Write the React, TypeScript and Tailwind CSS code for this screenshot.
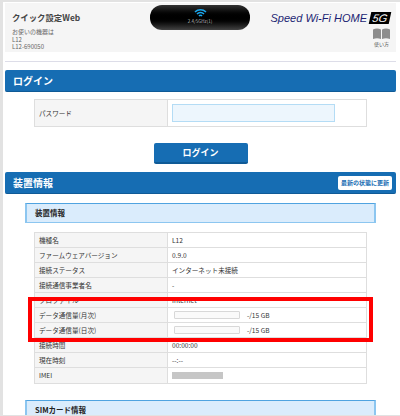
const font = { fontFamily: '"Noto Sans CJK JP", "Liberation Sans", sans-serif' };

const rows: [string, string][] = [
  ["機種名", "L12"],
  ["ファームウェアバージョン", "0.9.0"],
  ["接続ステータス", "インターネット未接続"],
  ["接続通信事業者名", "-"],
  ["プロファイル", "Internet"],
];

const rows2: [string, string][] = [
  ["接続時間", "00:00:00"],
  ["現在時刻", "--:--"],
];

function Row({ label, children }: { label: string; children: React.ReactNode }) {
  return (
    <div className="flex h-[15px] border-b border-[#dedede] last:border-b-0">
      <div className="w-[133px] shrink-0 bg-[#f5f5f5] border-r border-[#dedede] pl-[4px] text-[6.6px] leading-[14px] text-[#333]">
        {label}
      </div>
      <div className="flex-1 flex items-center pl-[4px] text-[6.6px] leading-[14px] text-[#333]">
        {children}
      </div>
    </div>
  );
}

function Usage() {
  return (
    <div className="flex items-center pl-[2px]">
      <div className="w-[66px] h-[8px] bg-[#fafafa] border border-[#d8d8d8] rounded-[1px]" />
      <span className="ml-[7px]">-/15 GB</span>
    </div>
  );
}

function Bar({ title, children }: { title: string; children?: React.ReactNode }) {
  return (
    <div className="h-[22px] flex items-center justify-between bg-[#166db3] rounded-[2px] border-b border-[#0f5a96] pl-[8px] pr-[4px]">
      <span className="text-[10px] font-bold text-white">{title}</span>
      {children}
    </div>
  );
}

function SubHeader({ title }: { title: string }) {
  return (
    <div className="mx-[20px] h-[20px] flex items-center bg-[#daecfc] border border-x-2 border-[#8cc6f0] border-t-[#4fa3e0] pl-[8px] text-[7.5px] font-bold text-[#222]">
      {title}
    </div>
  );
}

export default function App() {
  return (
    <div
      className="relative w-[400px] h-[416px] overflow-hidden bg-white border-l-[3px] border-t-2 border-b border-[#e2e2e2]"
      style={font}
    >
      <div className="ml-[2px] mr-[4px] mt-[1px]">
        <header className="h-[49px] bg-[#f5f5f5] flex justify-between relative">
          <div className="pl-[7px] pt-[9px]">
            <div className="text-[8.4px] leading-[11px] font-bold text-[#444]">クイック設定Web</div>
            <div className="mt-[5px] text-[6px] leading-[7.5px] text-[#666]">
              お使いの機器は
              <br />
              L12
              <br />
              L12-690050
            </div>
          </div>
          <div className="absolute left-[145px] top-[2px] w-[100px] h-[25px] rounded-[12px] bg-gradient-to-b from-[#333] via-[#000] to-[#444] flex flex-col items-center">
            <svg width="13" height="10" viewBox="0 0 13 10" className="mt-[3px]" fill="none" stroke="#1aa7ee" strokeWidth="1.6">
              <path d="M1 4a8 8 0 0 1 11 0" />
              <path d="M3 6a5 5 0 0 1 7 0" />
              <path d="M5 8a2 2 0 0 1 3 0" />
            </svg>
            <span className="text-[4.5px] leading-[6px] text-[#bbb]">2.4/5GHz(1)</span>
          </div>
          <div className="flex flex-col items-end pr-[6px] pt-[9px]">
            <div className="flex items-center">
              <span className="text-[11px] leading-[12px] italic text-[#1c1f73]" style={{ fontFamily: '"Liberation Sans", sans-serif' }}>
                Speed Wi-Fi HOME
              </span>
              <span className="ml-[3px] w-[20px] text-center -skew-x-12 bg-black text-white text-[11px] leading-[12px] italic" style={{ fontFamily: '"Liberation Sans", sans-serif' }}>
                5G
              </span>
            </div>
            <svg width="17" height="11" viewBox="0 0 17 11" className="mt-[4px]" fill="#8d8d8d">
              <path d="M0 1.5q4-2 8 0V11q-4-1.500-8 0z" />
              <path d="M9 1.500q4-2 8 0V11q-4-1.500-8 0z" />
            </svg>
            <span className="mt-[1px] text-[5px] leading-[7px] text-[#555] pr-[1px]">使い方</span>
          </div>
        </header>

        <div className="mt-[9px] h-px bg-[#dddde8]" />

        <div className="mt-[8px]">
          <Bar title="ログイン" />
        </div>
        <div className="mx-[29px] mt-[7px] h-[28px] flex border border-[#dedede]">
          <div className="w-[133px] shrink-0 bg-[#f5f5f5] border-r border-[#dedede] pl-[4px] text-[6.6px] leading-[26px] text-[#333]">
            パスワード
          </div>
          <div className="flex-1 pl-[4px] pt-[4px]">
            <div className="w-[163px] h-[18px] bg-[#edf6fd] border border-[#b4dcf5]" />
          </div>
        </div>
        <div className="mt-[16px] flex justify-center">
          <button className="w-[94px] h-[21px] bg-[#166db3] border-b-2 border-[#0f5a96] rounded-[2px] text-[9px] font-bold text-white">
            ログイン
          </button>
        </div>
        <div className="mt-[8px]">
          <Bar title="装置情報">
            <span className="h-[14px] px-[3px] bg-white rounded-[2px] text-[6px] leading-[14px] font-bold text-[#166db3]">
              最新の状態に更新
            </span>
          </Bar>
        </div>
        <div className="mt-[9px]">
          <SubHeader title="装置情報" />
        </div>
        <div className="mx-[29px] mt-[9px] border border-[#dedede]">
          {rows.map(([k, v]) => (
            <Row key={k} label={k}>
              {v}
            </Row>
          ))}
          <Row label="データ通信量(月次)">
            <Usage />
          </Row>
          <Row label="データ通信量(日次)">
            <Usage />
          </Row>
          {rows2.map(([k, v]) => (
            <Row key={k} label={k}>
              {v}
            </Row>
          ))}
          <Row label="IMEI">
            <div className="w-[51px] h-[7px] bg-[#c6c6c6]" />
          </Row>
        </div>
        <div className="mt-[16px]">
          <SubHeader title="SIMカード情報" />
        </div>
      </div>
      {/* annotation drawn over the screenshot */}
      <div className="absolute left-[25px] top-[295px] w-[345px] h-[45px] border-4 border-[#ff0000]" />
    </div>
  );
}
